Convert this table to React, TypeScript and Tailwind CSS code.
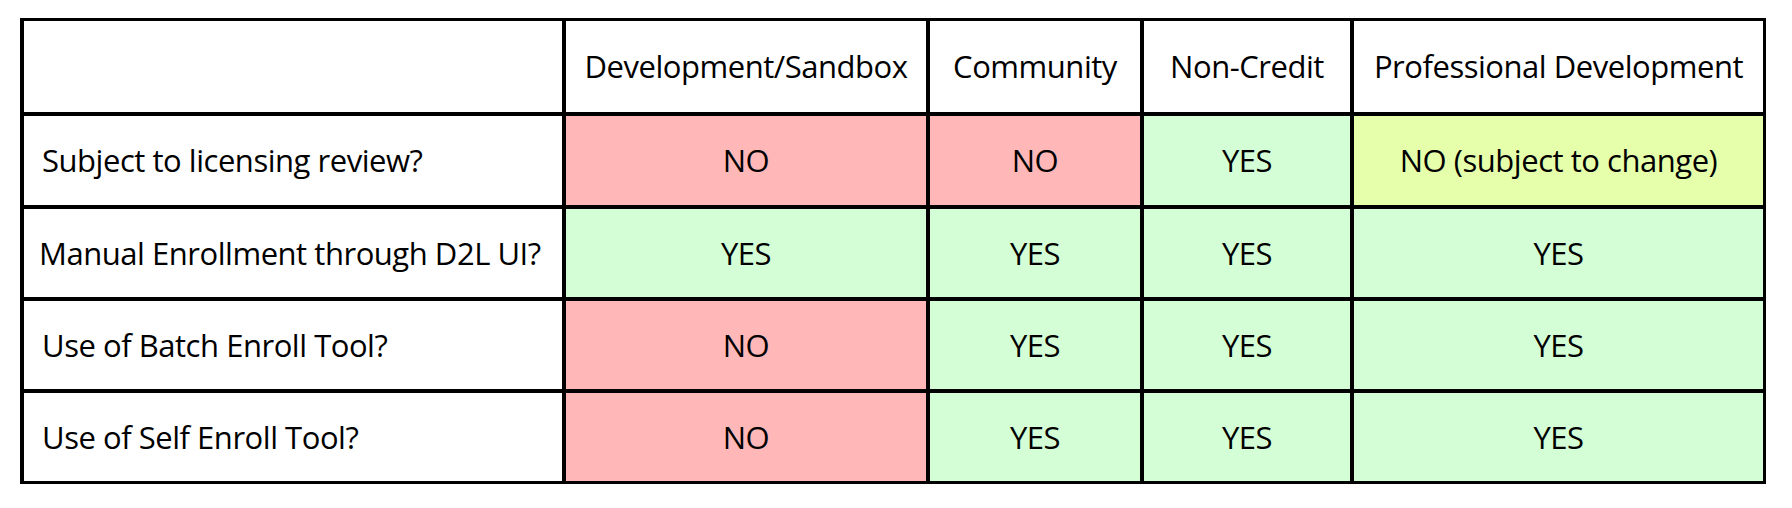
const font = { fontFamily: '"Open Sans", "Noto Sans", sans-serif' };

type Cell = { text: string; tone: 'no' | 'yes' | 'maybe' };

const columns = ['Development/Sandbox', 'Community', 'Non-Credit', 'Professional Development'];

const rows: { label: string; pad: string; cells: Cell[] }[] = [
  {
    label: 'Subject to licensing review?',
    pad: 'pl-[18px]',
    cells: [
      { text: 'NO', tone: 'no' },
      { text: 'NO', tone: 'no' },
      { text: 'YES', tone: 'yes' },
      { text: 'NO (subject to change)', tone: 'maybe' },
    ],
  },
  {
    label: 'Manual Enrollment through D2L UI?',
    pad: 'pl-[15px]',
    cells: [
      { text: 'YES', tone: 'yes' },
      { text: 'YES', tone: 'yes' },
      { text: 'YES', tone: 'yes' },
      { text: 'YES', tone: 'yes' },
    ],
  },
  {
    label: 'Use of Batch Enroll Tool?',
    pad: 'pl-[18px]',
    cells: [
      { text: 'NO', tone: 'no' },
      { text: 'YES', tone: 'yes' },
      { text: 'YES', tone: 'yes' },
      { text: 'YES', tone: 'yes' },
    ],
  },
  {
    label: 'Use of Self Enroll Tool?',
    pad: 'pl-[18px]',
    cells: [
      { text: 'NO', tone: 'no' },
      { text: 'YES', tone: 'yes' },
      { text: 'YES', tone: 'yes' },
      { text: 'YES', tone: 'yes' },
    ],
  },
];

const toneClass = {
  no: 'bg-[#ffb7b7]',
  yes: 'bg-[#d4ffd6]',
  maybe: 'bg-[#e6ffab]',
};

const App = () => {
  return (
    <div className="bg-white w-[1792px] h-[508px] pt-[18px] pl-[20px]" style={font}>
      <div className="w-fit grid grid-cols-[538px_360px_210px_206px_409px] grid-rows-[91px_89px_88px_88px_88px] gap-[4px] bg-black pt-[3px] pl-[4px] pr-[3px] pb-[3px] text-[31px] text-black leading-none tracking-[-0.015em]">
        {/* header row */}
        <div className="bg-white" />
        {columns.map((col) => (
          <div key={col} className="bg-white flex items-center justify-center">
            {col}
          </div>
        ))}

        {rows.map((row) => (
          <>
            <div key={row.label} className={`bg-white flex items-center ${row.pad}`}>
              {row.label}
            </div>
            {row.cells.map((cell, i) => (
              <div
                key={row.label + i}
                className={`${toneClass[cell.tone]} flex items-center justify-center`}
              >
                {cell.text}
              </div>
            ))}
          </>
        ))}
      </div>
    </div>
  );
};

export default App;
